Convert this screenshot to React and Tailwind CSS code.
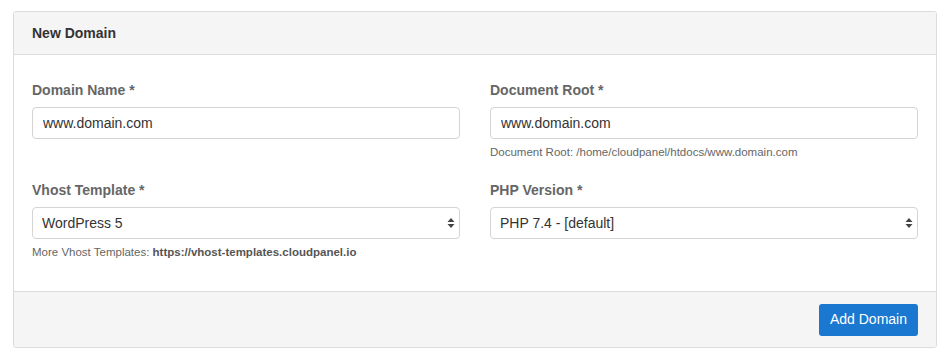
const FONT = { fontFamily: '"Liberation Sans", Arial, Helvetica, sans-serif' }

function Label({ children }) {
  return (
    <label className="block text-[14px] leading-[20px] font-bold text-[#666] mb-[7px]">
      {children}
    </label>
  )
}

function TextInput({ value }) {
  return (
    <input
      type="text"
      defaultValue={value}
      className="block w-full h-[32px] px-[10px] border border-[#d4d4d4] rounded-[4px] bg-white text-[14px] text-[#333] outline-none"
    />
  )
}

function SelectInput({ options }) {
  return (
    <div className="relative">
      <select className="block w-full h-[32px] pl-[9px] pr-6 border border-[#d4d4d4] rounded-[4px] bg-white text-[14px] text-[#333] appearance-none outline-none">
        {options.map((o) => (
          <option key={o}>{o}</option>
        ))}
      </select>
      <svg
        className="absolute right-[5px] top-[10px] pointer-events-none"
        width="8"
        height="12"
        viewBox="0 0 8 12"
      >
        <path d="M4 1 L7.5 5 L0.5 5 Z" fill="#444" />
        <path d="M4 11 L7.5 7 L0.5 7 Z" fill="#444" />
      </svg>
    </div>
  )
}

function Help({ children }) {
  return <p className="mt-[5px] text-[11.5px] leading-[16px] text-[#666]">{children}</p>
}

export default function App() {
  return (
    <div className="bg-white w-[948px] h-[364px] pt-[11px] pl-[13px]" style={FONT}>
      <div className="w-[924px] border border-[#dcdcdc] rounded-[3px] overflow-hidden">
        <div className="h-[43px] bg-[#f5f5f5] border-b border-[#dcdcdc] px-[18px] flex items-center">
          <h3 className="text-[14px] font-bold text-[#333]">New Domain</h3>
        </div>

        <div className="px-[18px] pt-[25px] h-[236px] bg-white">
          <div className="grid grid-cols-2 gap-x-[30px]">
            <div className="h-[100px]">
              <Label>Domain Name *</Label>
              <TextInput value="www.domain.com" />
            </div>
            <div className="h-[100px]">
              <Label>Document Root *</Label>
              <TextInput value="www.domain.com" />
              <Help>Document Root: /home/cloudpanel/htdocs/www.domain.com</Help>
            </div>
            <div>
              <Label>Vhost Template *</Label>
              <SelectInput options={['WordPress 5']} />
              <Help>
                More Vhost Templates: <b className="text-[#555]">https://vhost-templates.cloudpanel.io</b>
              </Help>
            </div>
            <div>
              <Label>PHP Version *</Label>
              <SelectInput options={['PHP 7.4 - [default]']} />
            </div>
          </div>
        </div>

        <div className="h-[56px] bg-[#f5f5f5] border-t border-[#dcdcdc] px-[18px] flex items-center justify-end">
          <button className="h-[32px] px-[11px] bg-[#1b78d1] rounded-[3px] text-white text-[14px]">
            Add Domain
          </button>
        </div>
      </div>
    </div>
  )
}
